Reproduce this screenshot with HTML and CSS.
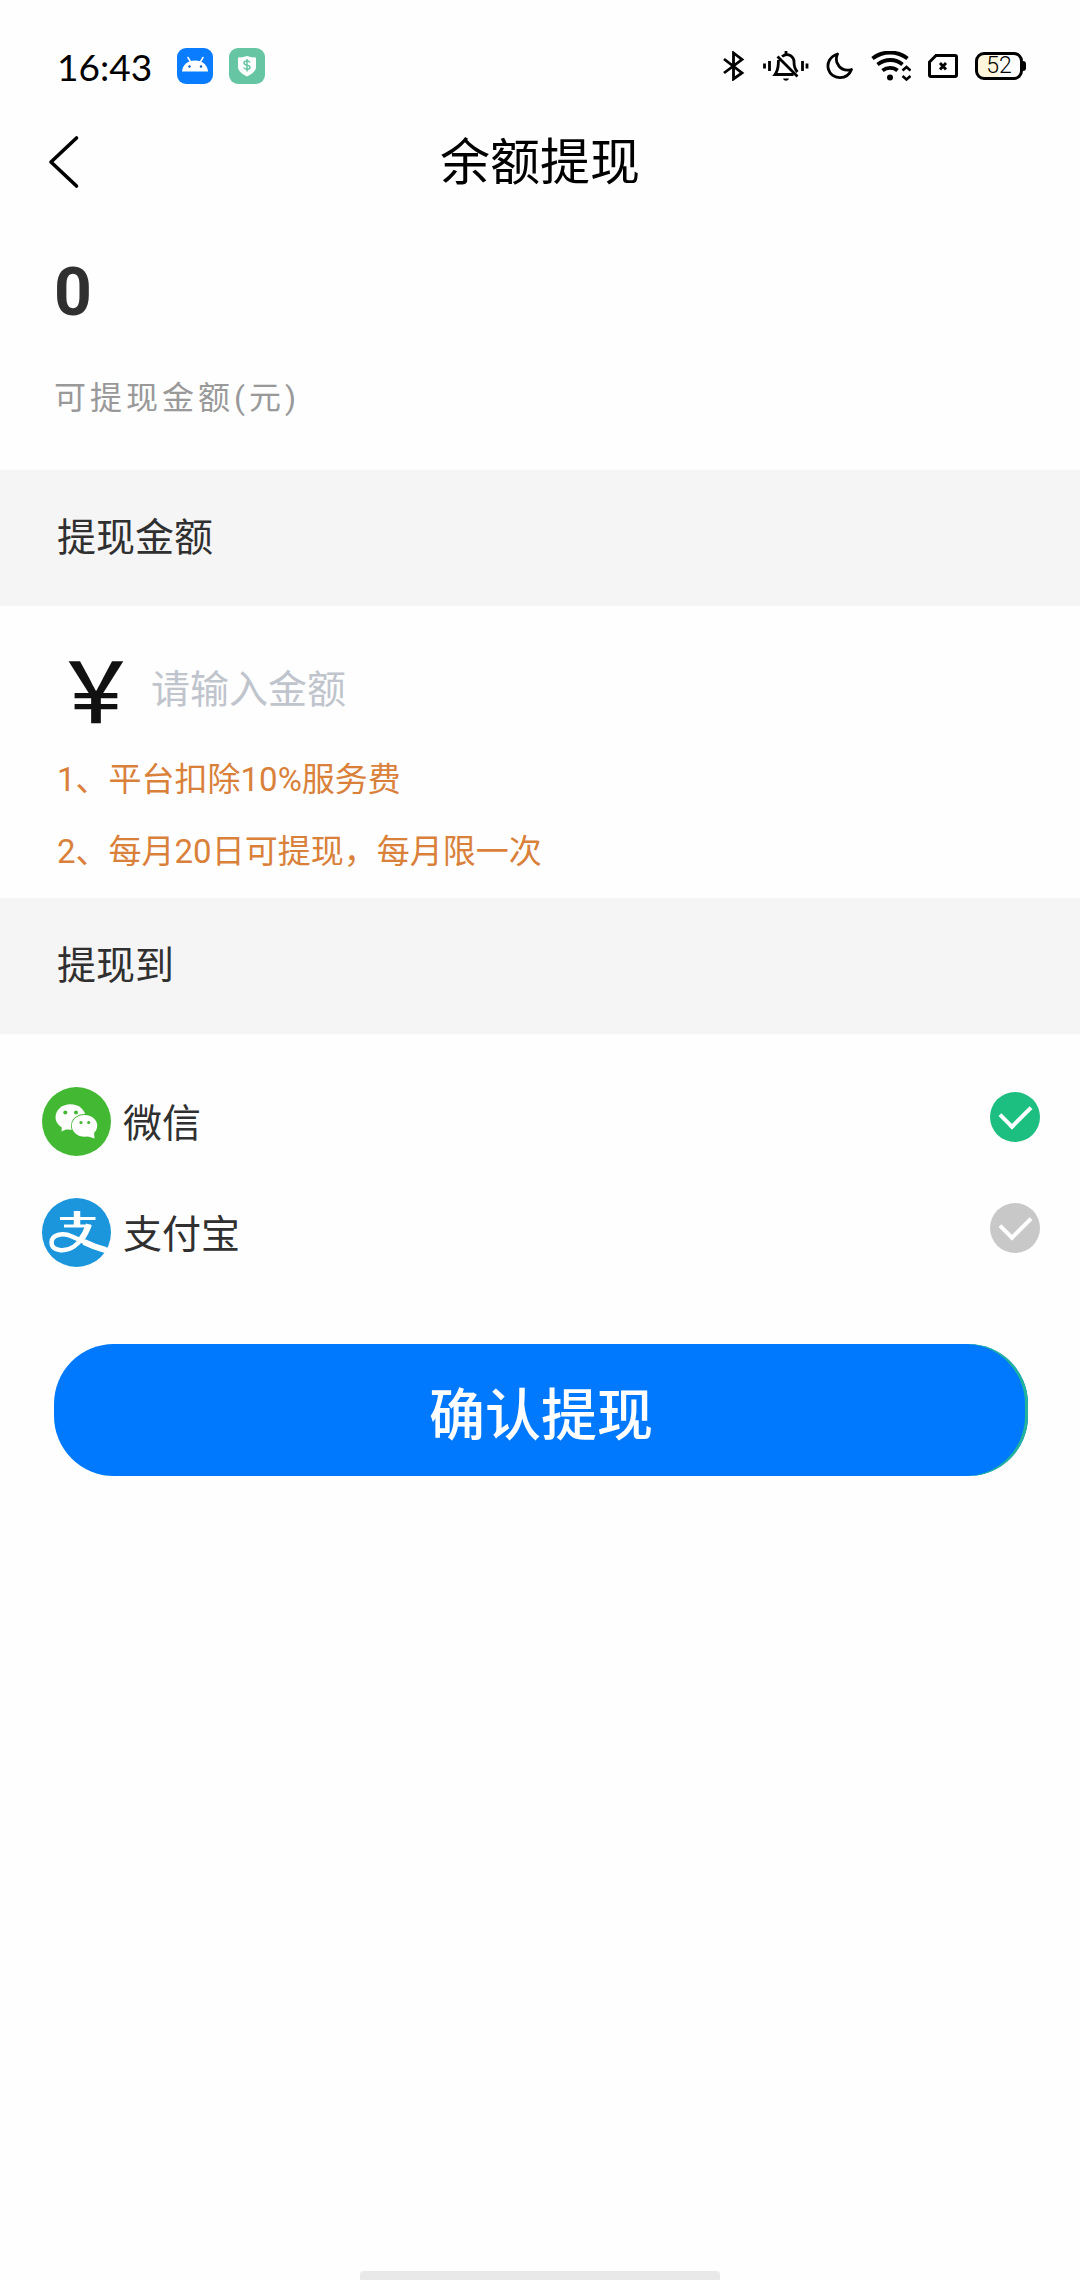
FILE: index.html
```html
<!DOCTYPE html>
<html lang="zh-CN">
<head>
<meta charset="utf-8">
<meta name="viewport" content="width=device-width, initial-scale=1">
<title>余额提现</title>
<link rel="stylesheet" href="styles.css">
</head>
<body>
<div class="page">
  <div class="status">
    <span class="time">16:43</span>
    <svg class="app" width="36" height="36" viewBox="0 0 36 36" aria-hidden="true">
      <rect width="36" height="36" rx="9" fill="#0a7cff"/>
      <path d="M5 23.500C5.500 17 10.500 12.500 18 12.500S30.500 17 31 23.500Z" fill="#fff"/>
      <path d="M11 9.500l3 5M26 9.500l-3 5" stroke="#fff" stroke-width="1.500" stroke-linecap="round"/>
      <circle cx="12.500" cy="18.500" r="1.200" fill="#0a5fc0"/><circle cx="24" cy="18.500" r="1.200" fill="#0a5fc0"/>
    </svg>
    <svg class="app" width="36" height="36" viewBox="0 0 36 36" aria-hidden="true">
      <rect width="36" height="36" rx="9" fill="#66c6a3"/>
      <path d="M18 8c3 1 6 1.500 9 1.500V19c0 4-4 7-9 9.500C13 26 9 23 9 19V9.500C12 9.500 15 9 18 8Z" fill="#fff"/>
      <path d="M21 14.500c-1-2-6-2-6 .5 0 3 6 1.500 6 4.300 0 2.500-5 2.500-6.300.2M18 11v12.500" fill="none" stroke="#66c6a3" stroke-width="1.500"/>
    </svg>
    <div class="tray">
      <svg width="24" height="30" viewBox="0 0 24 30" aria-hidden="true"><path d="M2 8l18 14-8.500 6V2L20 8.500 2 22" fill="none" stroke="#000" stroke-width="2.800"/></svg>
      <svg width="46" height="30" viewBox="0 0 46 30" aria-hidden="true">
        <g fill="none" stroke="#000" stroke-width="2.800">
          <path d="M1.500 12.500v5M6.500 10v10M39.500 10v10M44 12.500v5"/>
          <path d="M14.500 5.500l20 20M19 5.500c6-4.500 12 0 12 5.500 0 5 .5 7 3.500 10M15.500 9c-.5 6 .5 9-3.500 14.500h18.500"/>
          <path d="M23 0v4"/>
        </g>
        <path d="M20 27.500h6c-1 3-5 3-6 0Z"/>
      </svg>
      <svg width="28" height="28" viewBox="0 0 28 28" aria-hidden="true"><path d="M11.500 2C4 4.500.5 11 2.500 17.500 5.500 27.500 21 29 25.500 17.500 15 20.500 7.500 11 11.500 2Z" fill="none" stroke="#000" stroke-width="2.800" stroke-linejoin="round"/></svg>
      <svg width="40" height="30" viewBox="0 0 40 30" aria-hidden="true">
        <g fill="none" stroke="#000" stroke-width="3.800"><path d="M1.500 7.500c10-8 25-8 35 0M6.500 13.500c8-6 18-6 25 0M11.500 19.500c4.500-3.500 11-3.500 15 0"/></g>
        <circle cx="19" cy="26.500" r="3"/>
        <path d="M31.500 19.500l4-3.500 4 3.500M31.500 25l4 3.500 4-3.500" fill="none" stroke="#000" stroke-width="2.600"/>
      </svg>
      <svg width="30" height="24" viewBox="0 0 30 24" aria-hidden="true"><path d="M8 1.500h19a1.500 1.500 0 0 1 1.500 1.500v18a1.500 1.500 0 0 1-1.500 1.500H3A1.500 1.500 0 0 1 1.500 21V8Z" fill="none" stroke="#000" stroke-width="3"/><path d="M12 9l6 6.500M18 9l-6 6.500" stroke="#000" stroke-width="2.800"/></svg>
      <span class="battery">52</span>
    </div>
  </div>

  <header class="header">
    <button class="back" type="button" aria-label="返回">
      <svg width="32" height="54" viewBox="0 0 32 54" aria-hidden="true"><path d="M28.500 3L3 27l25.500 24" fill="none" stroke="#000" stroke-width="3.600" stroke-linecap="round" stroke-linejoin="round"/></svg>
    </button>
    <h1 class="title">余额提现</h1>
  </header>

  <section class="balance">
    <strong class="sum">0</strong>
    <span class="sum-label">可提现金额(元)</span>
  </section>

  <form class="form">
    <h2 class="band"><label for="amount">提现金额</label></h2>
    <div class="amount">
      <div class="amount-row">
        <span class="yen">￥</span>
        <input class="amount-input" id="amount" type="text" inputmode="decimal" placeholder="请输入金额">
      </div>
      <p class="note">1、平台扣除10%服务费</p>
      <p class="note">2、每月20日可提现，每月限一次</p>
    </div>

    <h2 class="band">提现到</h2>
    <div class="methods">
      <label class="method">
        <svg width="69" height="69" viewBox="0 0 69 69" aria-hidden="true">
          <circle cx="34.500" cy="34.500" r="34.500" fill="#43b933"/>
          <path d="M20 38l-.5 6.500 8-3.500Z" fill="#fff"/>
          <ellipse cx="28.500" cy="30" rx="15" ry="12.800" fill="#fff"/>
          <circle cx="23.300" cy="25.500" r="2" fill="#43b933"/><circle cx="34" cy="25.500" r="2" fill="#43b933"/>
          <ellipse cx="42.500" cy="38.800" rx="13.500" ry="11.700" fill="#43b933"/>
          <path d="M52 45l.5 6.500-8-2.500Z" fill="#fff"/>
          <ellipse cx="42.500" cy="38.800" rx="12.700" ry="10.900" fill="#fff"/>
          <circle cx="39" cy="35.500" r="1.600" fill="#43b933"/><circle cx="46.700" cy="35.500" r="1.600" fill="#43b933"/>
        </svg>
        <span class="method-name">微信</span>
        <input class="pick" type="radio" name="method" value="wechat" checked>
      </label>
      <label class="method">
        <svg width="69" height="69" viewBox="0 0 69 69" aria-hidden="true">
          <circle cx="34.500" cy="34.500" r="34.500" fill="#1b96dc"/>
          <g fill="none" stroke="#fff">
            <path d="M18 20.500h35.500" stroke-width="3.200"/>
            <path d="M35 13v15" stroke-width="6.500"/>
            <path d="M22 28h27" stroke-width="3"/>
            <path d="M46.500 27C44 34 40 43 32 48.500 23 54.500 9.500 53 9.500 44.500 9.500 37 20 34 30 38.500 42 44 52 49 65 52" stroke-width="4.500"/>
            <path d="M47 26.500C45 32 42 38 38 43" stroke-width="6"/>
            <path d="M42 44c7 3.500 14 6 21.500 8" stroke-width="6"/>
          </g>
        </svg>
        <span class="method-name">支付宝</span>
        <input class="pick" type="radio" name="method" value="alipay">
      </label>
    </div>
    <button class="submit" type="button">确认提现</button>
  </form>

  <div class="home-bar"></div>
</div>
</body>
</html>
```
FILE: styles.css
```css
* {
  box-sizing: border-box;
}

body {
  margin: 0;
  background: #fefefe;
  color: #303030;
  font-family: Roboto, "Noto Sans CJK SC", sans-serif;
}

h1, h2, p {
  margin: 0;
  font-weight: 400;
}

.page {
  display: flex;
  flex-direction: column;
  min-height: 100vh;
}

.status {
  display: flex;
  align-items: center;
  height: 90px;
  padding: 42px 57px 0;
  color: #000;
}

.time {
  width: 120px;
  padding-top: 2px;
  font-family: Lato, sans-serif;
  font-size: 37px;
  line-height: 48px;
}

.app {
  margin-right: 16px;
}

.tray {
  display: flex;
  align-items: center;
  gap: 17px;
  margin-left: auto;
}

.battery {
  position: relative;
  width: 48px;
  height: 28px;
  border: 3px solid #000;
  border-radius: 9px;
  background: linear-gradient(90deg, #fdf5dc 50%, #fefefe 50%);
  font-size: 23px;
  font-weight: 300;
  line-height: 22px;
  text-align: center;
}

.battery::after {
  position: absolute;
  top: 6px;
  right: -6px;
  width: 3px;
  height: 10px;
  border-radius: 0 3px 3px 0;
  background: #000;
  content: "";
}

.header {
  display: grid;
  grid-template-columns: 1fr auto 1fr;
  align-items: center;
  height: 144px;
  padding: 0 48px;
}

.back {
  display: flex;
  justify-self: start;
  padding: 0;
  border: 0;
  background: none;
}

.title {
  padding-top: 2px;
  color: #000;
  font-size: 50px;
  line-height: 72px;
}

.balance {
  display: flex;
  flex-direction: column;
  gap: 25px;
  padding: 3px 54px 48px;
}

.sum {
  font-size: 66px;
  line-height: 112px;
}

.sum-label {
  color: #999;
  font-size: 32px;
  letter-spacing: 4px;
  line-height: 48px;
}

.band {
  padding: 0 57px;
  background: #f5f5f5;
  font-size: 39px;
  line-height: 136px;
}

.amount {
  padding: 42px 57px 10px 54px;
}

.amount-row {
  display: flex;
  align-items: center;
  gap: 13px;
  height: 84px;
  margin-bottom: 12px;
}

.yen {
  color: #111;
  font-family: "Noto Sans CJK SC", sans-serif;
  font-size: 84px;
  font-weight: 500;
  line-height: 84px;
  padding-bottom: 6px;
}

.amount-input {
  flex: 1;
  min-width: 0;
  padding: 0;
  border: 0;
  outline: 0;
  background: none;
  color: #303030;
  font: inherit;
  font-size: 39px;
  line-height: 60px;
}

.amount-input::placeholder {
  color: #c0c4cc;
}

.note {
  padding-left: 3px;
  color: #d9813a;
  font-size: 33px;
  line-height: 72px;
}

.methods {
  padding: 32px 40px 0 42px;
}

.method {
  display: flex;
  align-items: center;
  gap: 12px;
  height: 111px;
}

.method-name {
  flex: 1;
  padding-top: 4px;
  font-size: 39px;
  line-height: 60px;
}

.pick {
  display: grid;
  place-items: center;
  width: 50px;
  height: 50px;
  margin: 0 0 10px;
  border-radius: 50%;
  background: #c8c8c8;
  appearance: none;
}

.pick:checked {
  background: #1dbf80;
}

.pick::after {
  width: 15px;
  height: 25px;
  margin-bottom: 8px;
  border: solid #fefefe;
  border-width: 0 4px 4px 0;
  transform: rotate(45deg);
  content: "";
}

.submit {
  display: block;
  width: calc(100% - 106px);
  height: 132px;
  margin: 56px 52px 0 54px;
  padding: 12px 0 0;
  border: 0;
  border-radius: 60px;
  background: #0079ff;
  box-shadow: inset -3px 0 0 #22b39a;
  color: #fff;
  font: inherit;
  font-size: 56px;
  font-weight: 500;
  line-height: 84px;
}

.home-bar {
  width: 33.333%;
  height: 9px;
  margin: auto auto 0;
  border-radius: 4px 4px 0 0;
  background: #e9e9e9;
}
```
